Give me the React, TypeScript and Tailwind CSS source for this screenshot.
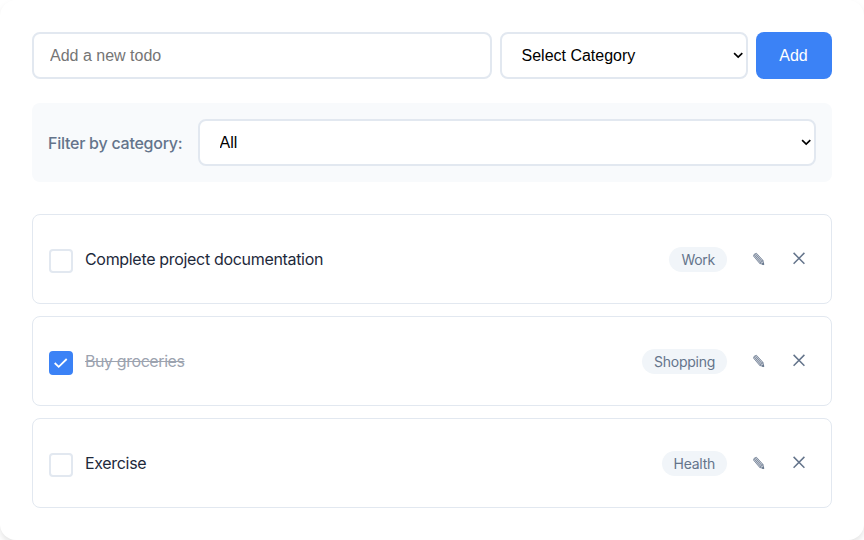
import { useState, type ReactNode } from 'react';

type Todo = { id: number; text: string; category: string; done: boolean };

const initialTodos: Todo[] = [
  { id: 1, text: 'Complete project documentation', category: 'Work', done: false },
  { id: 2, text: 'Buy groceries', category: 'Shopping', done: true },
  { id: 3, text: 'Exercise', category: 'Health', done: false },
];

const fieldClass =
  "h-[47px] rounded-lg border-2 border-[#e2e8f0] bg-white font-['Liberation_Sans',Arial,sans-serif] text-base text-black";

function PencilIcon() {
  return (
    <svg width="14" height="14" viewBox="0 0 14 14" fill="none" stroke="#64748b" strokeWidth="0.75">
      <path d="M1.5 4.1Q1.6 1.6 4.5 1.3L11 8.4 11.7 12.6 7.7 11.4Z" fill="#64748b" fillOpacity="0.35" />
      <path d="M2.5 3.2 8.7 10.4M3.6 2.3 9.9 9.4M7.7 11.4 11 8.4" />
      <path d="M10 12 11.5 10.9 11.7 12.6Z" fill="#64748b" />
    </svg>
  );
}

function CrossIcon() {
  return (
    <svg width="14" height="14" viewBox="0 0 14 14" fill="none" stroke="#64748b" strokeWidth="1.5">
      <path d="M1.6 1.9 12.4 12.7M12.4 1.9 1.6 12.7" />
    </svg>
  );
}

function Select({ className, children }: { className: string; children: ReactNode }) {
  return (
    <div className={`relative ${className}`}>
      <select className={`${fieldClass} w-full appearance-none pr-8 pl-[19.5px]`}>{children}</select>
      <svg
        className="pointer-events-none absolute top-5 right-[4.5px]"
        width="11"
        height="7"
        viewBox="0 0 11 7"
        fill="none"
        stroke="black"
        strokeWidth="1.7"
      >
        <path d="M1.1 1.2 5.2 5 9.3 1.2" />
      </svg>
    </div>
  );
}

function TodoRow({ todo, onToggle }: { todo: Todo; onToggle: () => void }) {
  return (
    <li className="flex h-[90px] items-center rounded-lg border border-[#e2e8f0] bg-white px-4">
      <button
        onClick={onToggle}
        aria-label={todo.text}
        className={
          todo.done
            ? 'mt-1 flex size-6 items-center justify-center rounded border-2 border-[#3b82f6] bg-[#3b82f6]'
            : 'mt-1 flex size-6 items-center justify-center rounded border-2 border-[#e2e8f0] bg-white'
        }
      >
        {todo.done && (
          <svg className="-ml-px shrink-0" width="14" height="12" viewBox="0 0 14 12" fill="none" stroke="white" strokeWidth="1.8">
            <path d="M0.7 6 4.7 9.8 12.7 2" />
          </svg>
        )}
      </button>
      <span
        className={
          todo.done
            ? 'ml-3 flex-1 tracking-[-0.42px] text-[#9ca3af] line-through'
            : 'ml-3 flex-1 tracking-[-0.32px] text-[#1e293b]'
        }
      >
        {todo.text}
      </span>
      <span className="flex h-[25px] items-center rounded-full bg-[#f1f5f9] px-3 pt-px text-sm tracking-[-0.26px] text-[#64748b]">{todo.category}</span>
      <button aria-label="Edit" className="ml-[25px] flex size-[14px]"><PencilIcon /></button>
      <button aria-label="Delete" className="mr-[9px] ml-[26px] flex size-[14px] -translate-y-px"><CrossIcon /></button>
    </li>
  );
}

export default function App() {
  const [todos, setTodos] = useState(initialTodos);
  const toggle = (id: number) =>
    setTodos(todos.map((t) => (t.id === id ? { ...t, done: !t.done } : t)));

  return (
    <div className="h-[540px] overflow-hidden bg-white font-[Inter,sans-serif] text-base">
      <main className="h-[540px] rounded-2xl bg-white p-8 shadow-[0_4px_6px_rgba(0,0,0,0.1)]">
        <div className="flex gap-2">
          <input className={`${fieldClass} w-[460px] px-4 placeholder:text-[#757575]`} placeholder="Add a new todo" />
          <Select className="w-[248px]">
            <option>Select Category</option>
          </Select>
          <button className="h-[47px] w-[76px] rounded-lg bg-[#3b82f6] pr-px font-['Liberation_Sans',Arial,sans-serif] text-white">Add</button>
        </div>
        <div className="mt-6 flex h-[79px] items-center rounded-lg bg-[#f8fafc] p-4">
          <label className="w-[150px] shrink-0 font-medium tracking-[-0.25px] text-[#64748b]">Filter by category:</label>
          <Select className="flex-1">
            <option>All</option>
          </Select>
        </div>
        <ul className="mt-8 flex flex-col gap-3">
          {todos.map((t) => (
            <TodoRow key={t.id} todo={t} onToggle={() => toggle(t.id)} />
          ))}
        </ul>
      </main>
    </div>
  );
}
